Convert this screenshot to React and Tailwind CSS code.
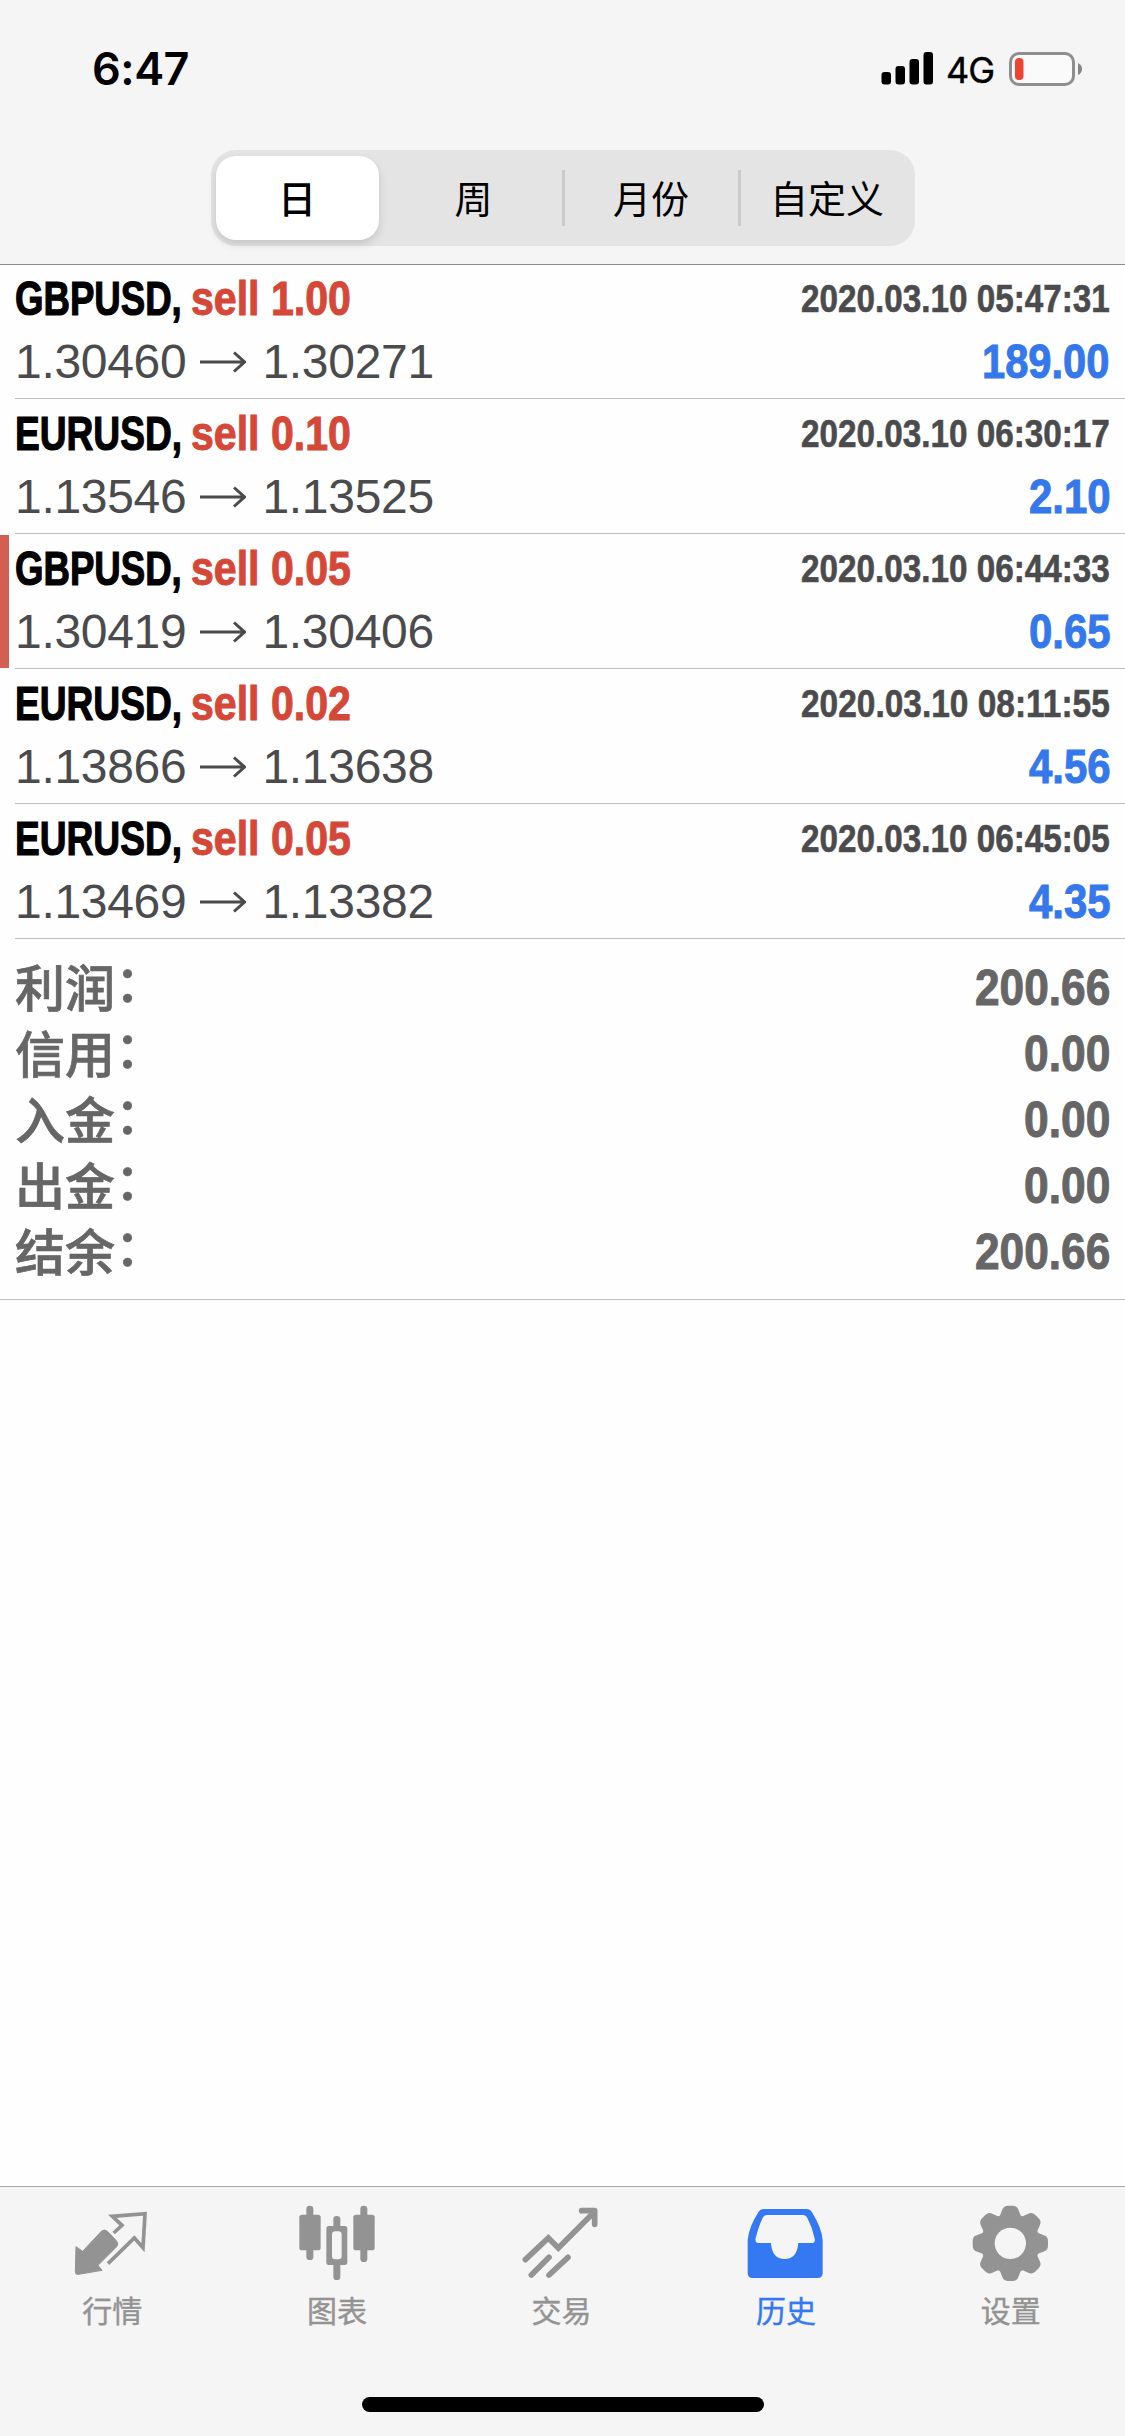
import { useLayoutEffect, useRef, useState } from "react";

const trades = [
  { symbol: "GBPUSD,", side: "sell 1.00", from: "1.30460", to: "1.30271", time: "2020.03.10 05:47:31", profit: "189.00" },
  { symbol: "EURUSD,", side: "sell 0.10", from: "1.13546", to: "1.13525", time: "2020.03.10 06:30:17", profit: "2.10" },
  { symbol: "GBPUSD,", side: "sell 0.05", from: "1.30419", to: "1.30406", time: "2020.03.10 06:44:33", profit: "0.65", marked: true },
  { symbol: "EURUSD,", side: "sell 0.02", from: "1.13866", to: "1.13638", time: "2020.03.10 08:11:55", profit: "4.56" },
  { symbol: "EURUSD,", side: "sell 0.05", from: "1.13469", to: "1.13382", time: "2020.03.10 06:45:05", profit: "4.35" },
];

const totals = [
  ["利润", "200.66"],
  ["信用", "0.00"],
  ["入金", "0.00"],
  ["出金", "0.00"],
  ["结余", "200.66"],
];

// Condenses a line of text horizontally so that it takes exactly `width` pixels.
function Condensed({ width, className = "", children }) {
  const ref = useRef(null);
  const [scale, setScale] = useState(1);
  useLayoutEffect(() => {
    setScale(width / ref.current.offsetWidth);
  }, [width, children]);
  return (
    <span className="block shrink-0 whitespace-nowrap" style={{ width }}>
      <span
        ref={ref}
        className={`inline-block origin-left ${className}`}
        style={{ transform: `scaleX(${scale})` }}
      >
        {children}
      </span>
    </span>
  );
}

// Width of a condensed amount: every digit has one pitch, the point has half of it.
const amountWidth = (text, pitch) => (text.length - 0.5) * pitch;

function StatusBar() {
  return (
    <div className="flex h-[138px] items-start justify-between pl-[92px] pr-[42px] pt-[47px]">
      <span className="font-['Inter',sans-serif] text-[45px] font-semibold leading-[44px] tracking-[-0.5px]">6:47</span>
      <div className="flex items-start pt-[5px]">
        <svg className="h-[34px] w-[53px]" viewBox="0 0 53 34">
          <rect x="0.5" y="20" width="9.5" height="12.5" rx="3" />
          <rect x="14.5" y="14" width="9.5" height="18.5" rx="3" />
          <rect x="28.5" y="7" width="9.5" height="25.5" rx="3" />
          <rect x="42.5" y="0" width="9.5" height="32.5" rx="3" />
        </svg>
        <span className="ml-3 w-[63px] whitespace-nowrap font-['Inter',sans-serif] text-[36px] font-normal leading-[36px] tracking-[-1px] [-webkit-text-stroke:0.4px]">4G</span>
        <svg className="h-[34px] w-[74px]" viewBox="0 0 74 34">
          <rect x="1.5" y="1.5" width="63" height="31" rx="8.5" fill="#fafafa" stroke="#8e8e90" strokeWidth="3" />
          <rect x="6" y="6" width="8.5" height="22" rx="4" fill="#eb4433" />
          <path d="M69 11Q73 13 73 17T69 23Z" fill="#858587" />
        </svg>
      </div>
    </div>
  );
}

function PeriodTabs() {
  return (
    <div className="mx-auto mt-3 flex h-24 w-[704px] items-center rounded-[25px] bg-[#e4e4e5] font-['Noto_Sans_CJK_SC',sans-serif] text-[38px] leading-[53px]">
      <div className="flex w-[175px] justify-center pr-[2px]">
        <div className="flex h-[84px] w-[163px] items-center justify-center rounded-[20px] bg-white pb-[3px] font-medium shadow-[0_4px_8px_rgba(0,0,0,0.14)]">日</div>
      </div>
      <div className="h-14 w-44 text-center">周</div>
      <div className="h-14 w-44 border-l-[3px] border-[#cbcbcc] text-center">月份</div>
      <div className="h-14 w-44 border-l-[3px] border-[#cbcbcc] text-center">自定义</div>
    </div>
  );
}

function Arrow() {
  return (
    <svg className="ml-[14px] mr-4 h-[22px] w-[46px]" viewBox="0 0 46 22" fill="none" stroke="#4a4a4c" strokeWidth="3">
      <path d="M0 11H45M34 1.5L44.5 11L34 20.5" />
    </svg>
  );
}

function TradeRow({ trade }) {
  return (
    <div className="flex h-[135px] bg-[#fefefe]">
      <div className={`my-px mr-1.5 w-[9px] shrink-0 ${trade.marked ? "bg-[#d45f50]" : ""}`} />
      <div className="flex-1 border-b border-[#bdbdc0] pr-[15px] font-['Liberation_Sans',sans-serif] text-[48px] leading-[62px]">
        <div className="flex h-[62px] items-start pt-[4px] font-bold">
          <Condensed width={167} className="text-black [-webkit-text-stroke:1.2px]">{trade.symbol}</Condensed>
          <div className="w-[9px]" />
          <Condensed width={160} className="text-[#d54837] [-webkit-text-stroke:1px]">{trade.side}</Condensed>
          <div className="ml-auto text-[38px] text-[#4b4b4d]">
            <Condensed width={309} className="[-webkit-text-stroke:0.6px]">{trade.time}</Condensed>
          </div>
        </div>
        <div className="flex h-[65px] items-center pt-[7px] tracking-[-0.3px] text-[#4b4b4d]">
          <span>{trade.from}</span>
          <Arrow />
          <span>{trade.to}</span>
          <div className="ml-auto font-bold tracking-normal text-[#3478eb]">
            <Condensed width={amountWidth(trade.profit, 23.2)} className="[-webkit-text-stroke:1px]">{trade.profit}</Condensed>
          </div>
        </div>
      </div>
    </div>
  );
}

function Totals() {
  return (
    <div className="h-[361px] border-b border-[#bdbdc0] bg-[#fefefe] pl-[15px] pr-[15px] pt-4 text-[#666]">
      {totals.map(([label, value]) => (
        <div key={label} className="flex h-[66px] items-center justify-between">
          <span className="flex items-start self-start font-['Noto_Sans_CJK_SC',sans-serif] text-[50px] font-medium leading-[60px] [-webkit-text-stroke:0.7px]">
            <span>{label}</span>
            <span className="leading-[50px]">：</span>
          </span>
          <div className="font-['Liberation_Sans',sans-serif] text-[50px] font-bold leading-[66px]">
            <Condensed width={amountWidth(value, 24.6)} className="[-webkit-text-stroke:1px]">{value}</Condensed>
          </div>
        </div>
      ))}
    </div>
  );
}

function QuotesIcon() {
  return (
    <svg className="size-[90px]" viewBox="201 90 270 270">
      <path d="M228 230L248 244L304 184Q313 176 322 184L349 212Q357 221 350 230L294 286L306 301L236 313Q226 315 226 305Z" fill="currentColor" stroke="currentColor" strokeWidth="3" strokeLinejoin="round" />
      <path d="M341 189L366 166L337 139L435 131L429 233L403 204L324 281" fill="none" stroke="currentColor" strokeWidth="11" />
    </svg>
  );
}

function ChartsIcon() {
  return (
    <svg className="size-[90px]" viewBox="875 90 270 270" fill="currentColor">
      <rect x="918" y="107" width="21" height="163" rx="10" />
      <rect x="897" y="134" width="64" height="107" rx="8" />
      <rect x="999" y="138" width="21" height="192" rx="10" />
      <rect x="978" y="168" width="63" height="117" rx="8" />
      <rect x="995" y="184" width="29" height="84" rx="10" fill="#f5f5f5" />
      <rect x="1080" y="107" width="21" height="169" rx="10" />
      <rect x="1059" y="134" width="64" height="107" rx="8" />
    </svg>
  );
}

function TradeIcon() {
  return (
    <svg className="size-[90px]" viewBox="202 90 270 270" fill="none" stroke="currentColor" strokeWidth="17" strokeLinecap="round" strokeLinejoin="round">
      <path d="M230 269L299 204L329 234L436 127" strokeLinejoin="miter" />
      <path d="M399 122H438V163" />
      <path d="M248 315L301 262M301 315L358 262" />
    </svg>
  );
}

function HistoryIcon() {
  return (
    <svg className="size-[90px]" viewBox="877 90 270 270" fill="currentColor">
      <path
        fillRule="evenodd"
        d="M946 117H1073Q1084 117 1090 127Q1119 174 1122 210V309Q1122 324 1107 324H912Q897 324 897 309V210Q901 170 929 127Q935 117 946 117ZM956 135Q946 135 942 144Q930 168 921 205Q918 219 930 219H967Q970 267 1008 267Q1045 267 1049 219H1088Q1101 219 1098 206Q1091 172 1076 144Q1072 135 1062 135Z"
      />
    </svg>
  );
}

function SettingsIcon() {
  const tooth = "M449 150L460 121Q464 107 478 107H493Q506 107 510 121L521 150Z";
  return (
    <svg className="size-[90px]" viewBox="352 90 270 270">
      <g fill="currentColor">
        {[0, 45, 90, 135, 180, 225, 270, 315].map((angle) => (
          <path key={angle} d={tooth} transform={`rotate(${angle} 485 220)`} />
        ))}
        <circle cx="485" cy="220" r="89" />
      </g>
      <circle cx="485" cy="220" r="47" fill="#f5f5f5" />
    </svg>
  );
}

const navigation = [
  { label: "行情", Icon: QuotesIcon },
  { label: "图表", Icon: ChartsIcon },
  { label: "交易", Icon: TradeIcon },
  { label: "历史", Icon: HistoryIcon, active: true },
  { label: "设置", Icon: SettingsIcon },
];

function TabBar() {
  return (
    <div className="flex h-[250px] flex-col border-t border-[#a9a9ab] bg-[#f5f5f5]">
      <div className="grid grid-cols-5 pr-[2px] pt-[13px]">
        {navigation.map(({ label, Icon, active }) => (
          <div key={label} className={`flex flex-col items-center ${active ? "text-[#3579f2]" : "text-[#939393]"}`}>
            <Icon />
            <span className="font-['Noto_Sans_CJK_SC',sans-serif] text-[30px] leading-[39px] [-webkit-text-stroke:0.4px]">{label}</span>
          </div>
        ))}
      </div>
      <div className="mx-auto mb-6 mt-auto h-[15px] w-[402px] rounded-full bg-black" />
    </div>
  );
}

export default function App() {
  return (
    <div className="flex h-[2436px] w-[1125px] flex-col overflow-hidden bg-[#fefefe] text-black">
      <div className="relative z-10 h-[265px] border-b border-[#8c8c8e] bg-[#f5f5f5]">
        <StatusBar />
        <PeriodTabs />
      </div>
      <div className="-mt-px">
        {trades.map((trade) => (
          <TradeRow key={trade.time} trade={trade} />
        ))}
      </div>
      <Totals />
      <div className="flex-1" />
      <TabBar />
    </div>
  );
}
